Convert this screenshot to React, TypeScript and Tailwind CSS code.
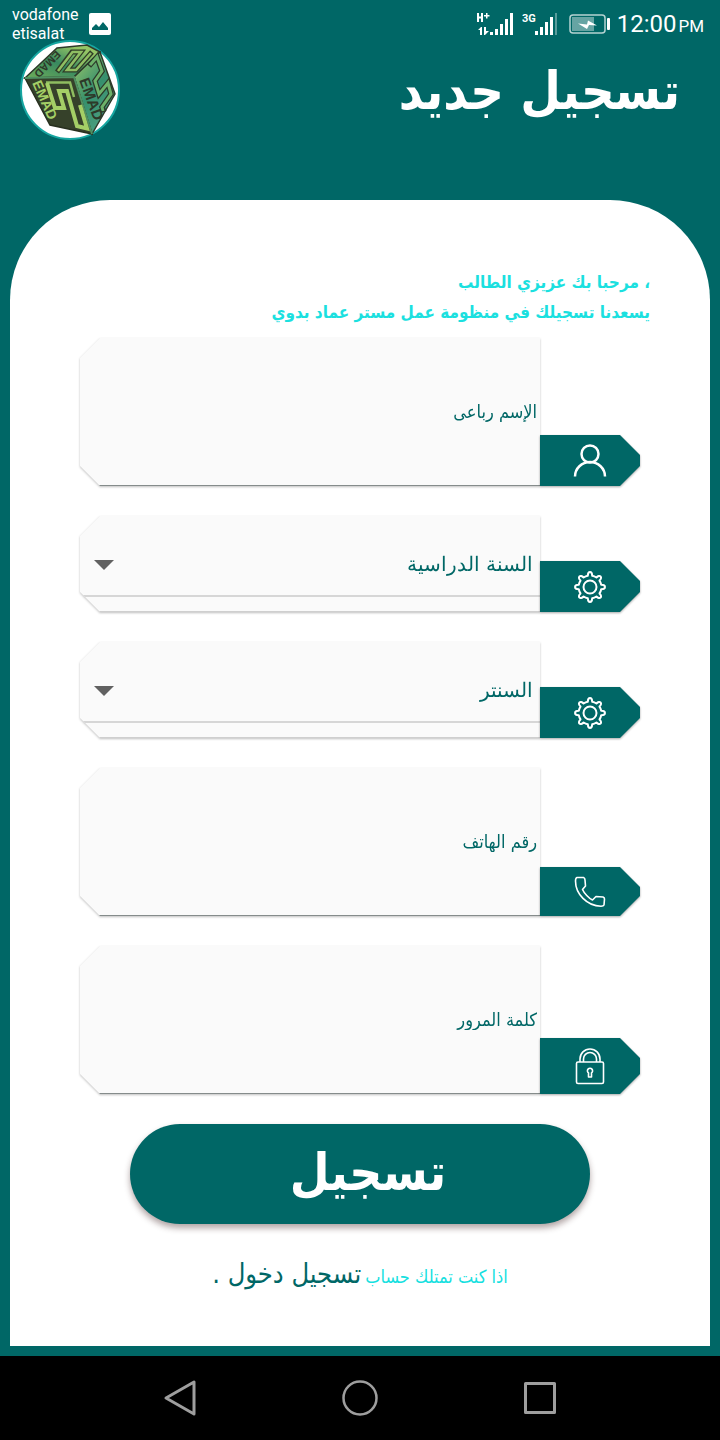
import React from "react";

type TagIcon = "user" | "gear" | "phone" | "lock";

function Logo() {
  return (
    <svg viewBox="0 0 100 100" className="h-[100px] w-[100px] shrink-0" role="img" aria-label="EMAD">
      <defs>
        <linearGradient id="top" x1="0" y1="1" x2="1" y2="0">
          <stop offset="0" stopColor="#6fae5a" />
          <stop offset="0.45" stopColor="#38895f" />
          <stop offset="0.8" stopColor="#94c565" />
        </linearGradient>
        <linearGradient id="side" x1="0" y1="0" x2="0.6" y2="1">
          <stop offset="0" stopColor="#a5cc68" />
          <stop offset="0.55" stopColor="#368f6d" />
          <stop offset="1" stopColor="#4da081" />
        </linearGradient>
      </defs>
      <circle cx="50" cy="50" r="49" fill="#fff" stroke="#16a6a1" strokeWidth="2" />
      <path d="M5 38 37 8 67 5 80 12 54 37Z" fill="url(#top)" stroke="#2d3929" strokeWidth="1.5" />
      <path d="M54 37 80 12 95 54 72 94Z" fill="url(#side)" stroke="#2d3929" strokeWidth="1.5" />
      <path d="M5 38 54 37 72 94 30 85Z" fill="#36412a" stroke="#28301f" strokeWidth="1.5" />
      <path d="M5 38 54 37 72 94" fill="none" stroke="#509061" strokeWidth="2" />
      <g fill="none" strokeLinejoin="miter">
        <path d="M26 42.500H50L54 57" stroke="#8fbd60" strokeWidth="2.5" />
        <path d="M27 43 35 68H44L39 51H47L57 86 67 88.500 60 65" stroke="#a4cf66" strokeWidth="4" />
        <path d="M37 32 52 12H61L47 30H56L72 12" stroke="#2f3c27" strokeWidth="5" />
        <path d="M38 31 52.500 12H61L47 30H56L71 13" stroke="#8fbe62" strokeWidth="2.600" />
        <path d="M69 26 77 17 82 31 75 41 79 54 88 43 91 54 82 67 84 72" stroke="#2c3b2a" strokeWidth="5.500" />
        <path d="M70 25 77 17 82 31 75 41 79 54 88 43 91 54 82 67 83 71" stroke="#6db169" strokeWidth="3" />
      </g>
      <g fontFamily="Liberation Sans" fontWeight="700">
        <text transform="translate(12 43) rotate(66)" fontSize="14" fill="#a4cf66">EMAD</text>
        <text transform="translate(36 10) rotate(134)" fontSize="11" fill="#2d3929">EMAD</text>
        <text transform="translate(59 40) rotate(70)" fontSize="15" fill="#2d3929">EMAD</text>
      </g>
    </svg>
  );
}

function StatusBar() {
  return (
    <div className="flex h-10 items-start justify-between pl-3 pr-4 pt-[5px] font-['Roboto',sans-serif] text-white">
      <div className="flex items-start gap-[9px]">
        <div className="text-base leading-[19px]">
          vodafone
          <br />
          etisalat
        </div>
        <svg viewBox="0 0 24 24" className="mt-[7px] h-6 w-6">
          <rect x="1" y="1" width="22" height="22" rx="2" fill="#fff" />
          <path d="M4 18V16L8 12l3 3 4-5 5 6v2Z" fill="#006766" />
        </svg>
      </div>
      <div className="flex h-[38px] items-center">
        <svg viewBox="0 0 36 24" className="h-6 w-9" fill="#fff">
          <path d="M0 1h2v3.500h2V1h2v9H4V6.500H2V10H0zM9 1h1.500v2h2v1.500h-2v2H9v-2H7V3h2zM1 18l3-3h1v8H3v-5zM7 15h2v4h3l-4 4H7z" />
          <path d="M13 20h3v3h-3zM18 17h3v6h-3zM23 12h3v11h-3zM28 7h3v16h-3zM33 1h3v22h-3z" />
        </svg>
        <svg viewBox="0 0 36 24" className="ml-[9px] h-6 w-9" fill="#fff">
          <text x="0" y="10" fontSize="11" fontWeight="700" fontFamily="Roboto">3G</text>
          <path d="M13 19h3v4h-3zM18 15h3v8h-3zM23 10h3v13h-3zM28 5h3v18h-3z" />
          <path d="M33 1h2v22h-2z" opacity=".35" />
        </svg>
        <svg viewBox="0 0 42 22" className="ml-[11px] h-[22px] w-[42px]">
          <rect x="1" y="2" width="35" height="18" rx="3" fill="none" stroke="#b5d3d2" strokeWidth="1.5" />
          <rect x="3" y="4" width="22" height="14" fill="#66a4a3" />
          <path d="M9 10.500 18 11.500 19 7.500 28 12.500 20 12 18 16Z" fill="#fff" />
          <rect x="38" y="5" width="3" height="12" rx="1" fill="#fff" />
        </svg>
        <div className="ml-[6px] flex items-baseline gap-[2px] leading-none">
          <span className="text-2xl">12:00</span>
          <span className="text-[17px]">PM</span>
        </div>
      </div>
    </div>
  );
}

function Icon({ name }: { name: TagIcon }) {
  const stroke = { fill: "none", stroke: "#fff", strokeLinejoin: "round" as const };
  if (name === "user")
    return (
      <svg viewBox="0 0 36 36" className="h-9 w-9" {...stroke} strokeWidth="2.5">
        <circle cx="18" cy="11" r="8.500" />
        <path d="M3 33.500A15 14.500 0 0 1 33 33.500" />
      </svg>
    );
  if (name === "gear")
    return (
      <svg viewBox="0 0 36 36" className="h-9 w-9" {...stroke} strokeWidth="2">
        <circle cx="18" cy="18" r="6.5" />
        <path d="M15.8 6.8C15.8 1.8 20.2 1.8 20.2 6.8Q22.4 7.2 24.4 8.5C27.8 4.9 31.1 8.2 27.5 11.6Q28.8 13.6 29.2 15.8C34.2 15.8 34.2 20.2 29.2 20.2Q28.8 22.4 27.5 24.4C31.1 27.8 27.8 31.1 24.4 27.5Q22.4 28.8 20.2 29.2C20.2 34.2 15.8 34.2 15.8 29.2Q13.6 28.8 11.6 27.5C8.2 31.1 4.9 27.8 8.5 24.4Q7.2 22.4 6.8 20.2C1.8 20.2 1.8 15.8 6.8 15.8Q7.2 13.6 8.5 11.6C4.9 8.2 8.2 4.9 11.6 8.5Q13.6 7.2 15.8 6.8Z" />
      </svg>
    );
  if (name === "phone")
    return (
      <svg viewBox="0 0 36 36" className="h-9 w-9" {...stroke} strokeWidth="1.6">
        <path d="M5 3.500 11.500 3.500Q13 4 13 6L13.500 12L10.500 15.500C12 19 17 24.500 20.500 26L24 22.500L31 23Q32.500 23.500 32.500 25L32 31Q31.500 32.300 29 32.300C15 32 3.500 20 3.500 7Q3.500 4 5 3.500Z" />
      </svg>
    );
  return (
    <svg viewBox="0 0 36 40" className="h-10 w-9" {...stroke} strokeWidth="1.6">
      <rect x="4.500" y="16" width="27" height="21.500" rx="1.5" />
      <path d="M8 16v-3a10 10 0 0 1 20 0v3M11.500 16v-3a6.500 6.500 0 0 1 13 0v3" />
      <path d="M16.500 31v-4a2.600 2.600 0 1 1 3 0v4Z" />
    </svg>
  );
}

function Row({ icon, tag, children }: { icon: TagIcon; tag: string; children: React.ReactNode }) {
  return (
    <div dir="ltr" className="flex items-end">
      <div className="min-w-0 flex-1 drop-shadow-[0_1px_1px_rgba(0,0,0,0.25)]">
        <div className="bg-[#fafafa] [clip-path:polygon(20px_0,100%_0,100%_100%,20px_100%,0_calc(100%-20px),0_20px)]">
          {children}
        </div>
      </div>
      <div className="w-[100px] shrink-0 drop-shadow-[0_1px_1px_rgba(0,0,0,0.35)]">
        <div
          className={
            "flex items-center justify-center bg-[#006766] [clip-path:polygon(0_0,80px_0,100%_20px,100%_calc(100%-20px),80px_100%,0_100%)] " +
            tag
          }
        >
          <Icon name={icon} />
        </div>
      </div>
    </div>
  );
}

function TextRow(props: { id: string; label: string; type: string; icon: TagIcon; tag: string }) {
  return (
    <Row icon={props.icon} tag={props.tag}>
      <input
        id={props.id}
        type={props.type}
        dir="rtl"
        aria-label={props.label}
        placeholder={props.label}
        className="block h-[148px] w-full border-b border-[#858c8b] bg-transparent px-[3px] font-['DejaVu_Sans_Condensed','DejaVu_Sans',sans-serif] text-lg font-medium text-[#006766] outline-none placeholder:text-[#006766]"
      />
    </Row>
  );
}

function SelectRow({ id, label }: { id: string; label: string }) {
  return (
    <Row icon="gear" tag="h-[51px]">
      <div className="h-24 border-b border-[#cfcfcf]">
        <div className="relative h-[81px] border-b-2 border-[#d6d6d6]">
          <select
            id={id}
            dir="rtl"
            aria-label={label}
            className="block h-full w-full appearance-none bg-transparent pt-4 pr-[7px] pl-10 font-['DejaVu_Sans',sans-serif] text-xl font-extralight text-[#006766] outline-none"
          >
            <option>{label}</option>
          </select>
          <svg viewBox="0 0 20 10" className="pointer-events-none absolute bottom-[25px] left-[14px] h-[10px] w-5">
            <path d="M0 0h20L10 10Z" fill="#616161" />
          </svg>
        </div>
      </div>
    </Row>
  );
}

export default function App() {
  return (
    <div
      dir="rtl"
      lang="ar"
      className="flex min-h-screen flex-col bg-[#006766] font-['DejaVu_Sans_Condensed','DejaVu_Sans',sans-serif]"
    >
      <div dir="ltr">
        <StatusBar />
      </div>
      <header dir="ltr" className="flex h-40 items-start justify-between px-5">
        <Logo />
        <h1 dir="rtl" className="pr-5 pt-4 text-[52px] leading-[70px] font-bold text-white">
          تسجيل جديد
        </h1>
      </header>
      <main className="mx-[10px] mb-[10px] flex-1 rounded-t-[100px] bg-white pt-[67px]">
        <p className="px-[60px] text-[17px] leading-[30px] font-bold text-[#1be0df]">
          ، مرحبا بك عزيزي الطالب
          <br />
          يسعدنا تسجيلك في منظومة عمل مستر عماد بدوي
        </p>
        <form className="px-[70px] pt-[11px]" onSubmit={(e) => e.preventDefault()}>
          <div className="flex flex-col gap-[30px]">
            <TextRow id="name" label="الإسم رباعى" type="text" icon="user" tag="h-[51px]" />
            <SelectRow id="year" label="السنة الدراسية" />
            <SelectRow id="center" label="السنتر" />
            <TextRow id="phone" label="رقم الهاتف" type="tel" icon="phone" tag="h-[49px]" />
            <TextRow id="password" label="كلمة المرور" type="password" icon="lock" tag="h-[56px]" />
          </div>
          <div className="px-[50px] pt-[30px]">
            <button className="block h-[100px] w-full rounded-[50px] bg-[#006766] pb-1 pl-4 text-[51px] leading-none font-bold text-white shadow-[0_4px_6px_rgba(60,30,30,0.4)]">
              تسجيل
            </button>
          </div>
        </form>
        <p className="flex items-baseline justify-center gap-1 pt-7 leading-[44px]">
          <span className="text-lg text-[#16dfdf]">اذا كنت تمتلك حساب</span>
          <a href="#login" className="text-[27px] text-[#006766]">
            تسجيل دخول .
          </a>
        </p>
      </main>
      <nav dir="ltr" className="flex h-[84px] items-center justify-center gap-[140px] bg-black">
        <button aria-label="Back">
          <svg viewBox="0 0 40 40" className="h-10 w-10" fill="none" stroke="#9e9e9e" strokeWidth="3" strokeLinejoin="round">
            <path d="M34 4v32L6 20Z" />
          </svg>
        </button>
        <button aria-label="Home">
          <svg viewBox="0 0 40 40" className="h-10 w-10" fill="none" stroke="#9e9e9e" strokeWidth="2.5">
            <circle cx="20" cy="20" r="16.500" />
          </svg>
        </button>
        <button aria-label="Recent apps">
          <svg viewBox="0 0 40 40" className="h-10 w-10" fill="none" stroke="#9e9e9e" strokeWidth="3" strokeLinejoin="round">
            <path d="M5.500 5.500h29v29h-29Z" />
          </svg>
        </button>
      </nav>
    </div>
  );
}
